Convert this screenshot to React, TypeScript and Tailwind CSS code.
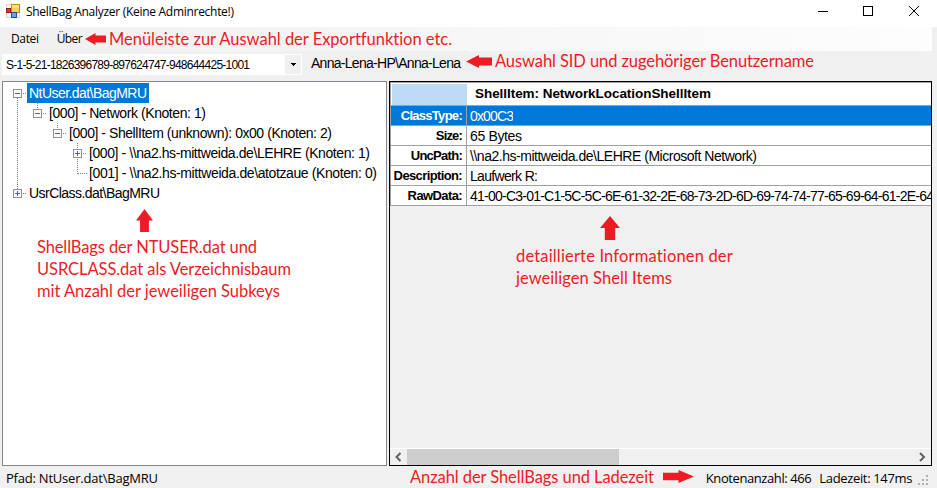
import { useLayoutEffect, useRef } from "react";
import type { ReactNode } from "react";
import clsx from "clsx";

// A line of text whose tracking is computed so that its glyphs span `w` pixels.
function Line({ w, className, children }: { w: number; className?: string; children: string }) {
  const ref = useRef<HTMLSpanElement>(null);
  useLayoutEffect(() => {
    const el = ref.current;
    if (!el) return;
    el.style.letterSpacing = "0px";
    const natural = el.getBoundingClientRect().width;
    el.style.letterSpacing = `${(w - natural) / (children.length - 1)}px`;
  }, [w, children]);
  return (
    <span ref={ref} className={clsx("inline-block whitespace-pre", className)}>
      {children}
    </span>
  );
}

const UI = "font-['Open_Sans','Noto_Sans',sans-serif] leading-4";
const ARIAL = "font-['Liberation_Sans',Arial,sans-serif] leading-4";
const NOTE = "font-[Lato,sans-serif] text-[16.5px] leading-[22px] text-[#ed1c24]";

type Dir = "left" | "right" | "up";
function Arrow({ dir, className }: { dir: Dir; className: string }) {
  const points = {
    left: "0,50 50,0 50,20 100,20 100,80 50,80 50,100",
    right: "100,50 50,0 50,22 0,22 0,78 50,78 50,100",
    up: "50,0 100,50 76,50 76,100 24,100 24,50 0,50",
  }[dir];
  return (
    <svg viewBox="0 0 100 100" preserveAspectRatio="none" className={clsx("absolute", className)}>
      <polygon points={points} fill="#ed1c24" />
    </svg>
  );
}

function Note({ className, children }: { className: string; children: ReactNode }) {
  return <div className={clsx("absolute flex flex-col items-start", NOTE, className)}>{children}</div>;
}

function AppIcon() {
  return (
    <svg width="14" height="14" viewBox="0 0 14 14" shapeRendering="crispEdges">
      <rect x="0" y="0" width="14" height="14" fill="#d9d9d9" />
      <rect x="1" y="1" width="12" height="12" fill="#f4f4f4" />
      <rect x="5" y="0" width="9" height="9" fill="#c08a10" />
      <rect x="6" y="1" width="7" height="7" fill="#ffcf4a" />
      <rect x="6" y="1" width="7" height="3" fill="#ffe08a" />
      <rect x="0" y="4" width="5" height="5" fill="#a01818" />
      <rect x="1" y="5" width="3" height="3" fill="#d8402f" />
      <rect x="5" y="8" width="6" height="6" fill="#1f4fae" />
      <rect x="6" y="9" width="4" height="4" fill="#6f9eee" />
    </svg>
  );
}

function Expander({ x, y, open }: { x: number; y: number; open: boolean }) {
  return (
    <g>
      <rect x={x - 3.5} y={y - 3.5} width="8" height="8" fill="#fafafa" stroke="#919191" />
      <path d={`M${x - 2} ${y + 0.5}h5`} stroke="#4b63a7" />
      {!open && <path d={`M${x + 0.5} ${y - 2}v5`} stroke="#4b63a7" />}
    </g>
  );
}

function TreeLines() {
  return (
    <svg width="100" height="130" className="absolute left-0 top-0" shapeRendering="crispEdges">
      <g stroke="#808080" strokeDasharray="1 1">
        <path d="M14.5 16V112 M34.5 21V32 M54.5 41V52 M74.5 61V92" />
        <path d="M20 11.5H24 M40 31.5H44 M60 51.5H64 M80 71.5H84 M75 91.5H84 M20 111.5H24" />
      </g>
      <Expander x={14} y={11} open />
      <Expander x={34} y={31} open />
      <Expander x={54} y={51} open />
      <Expander x={74} y={71} open={false} />
      <Expander x={14} y={111} open={false} />
    </svg>
  );
}

const nodes = [
  { pad: "pl-6", text: "NtUser.dat\\BagMRU", w: 118, selected: true },
  { pad: "pl-11", text: "[000] - Network (Knoten: 1)", w: 157 },
  { pad: "pl-16", text: "[000] - ShellItem (unknown): 0x00 (Knoten: 2)", w: 263 },
  { pad: "pl-21", text: "[000] - \\\\na2.hs-mittweida.de\\LEHRE (Knoten: 1)", w: 281 },
  { pad: "pl-21", text: "[001] - \\\\na2.hs-mittweida.de\\atotzaue (Knoten: 0)", w: 288 },
  { pad: "pl-6", text: "UsrClass.dat\\BagMRU", w: 131 },
];

const rows = [
  { name: "ClassType:", nw: 62, value: "0x00C3", w: 44, selected: true },
  { name: "Size:", nw: 27, value: "65 Bytes", w: 52 },
  { name: "UncPath:", nw: 52, value: "\\\\na2.hs-mittweida.de\\LEHRE (Microsoft Network)", w: 287 },
  { name: "Description:", nw: 69, value: "Laufwerk R:", w: 68 },
  {
    name: "RawData:",
    nw: 55,
    value: "41-00-C3-01-C1-5C-5C-6E-61-32-2E-68-73-2D-6D-69-74-74-77-65-69-64-61-2E-64",
    w: 464,
  },
];

export default function App() {
  return (
    <div className="relative flex h-[488px] w-[937px] flex-col overflow-hidden bg-[#f0f0f0] text-black">
      <header className="flex h-[27px] shrink-0 items-start bg-white pl-1.5">
        <div className="pt-1">
          <AppIcon />
        </div>
        <Line w={208} className={clsx(UI, "ml-1.5 mt-1 text-[12px]")}>ShellBag Analyzer (Keine Adminrechte!)</Line>
        <svg width="119" height="27" className="ml-auto" shapeRendering="crispEdges" fill="none" stroke="black">
          <path d="M0 11.5h10" />
          <rect x="45.5" y="6.5" width="9" height="9" />
          <path d="M91 6l10 10M101 6l-10 10" shapeRendering="geometricPrecision" />
        </svg>
      </header>

      <nav className={clsx("mr-[5px] flex h-6 shrink-0 bg-linear-to-r from-[#f0f0f0] to-[#fdfdfd] pl-[11px] pt-1 text-[12px]", UI)}>
        <Line w={28} className="mr-[18px]">Datei</Line>
        <Line w={26}>Über</Line>
      </nav>

      <div className="flex h-[30px] shrink-0 pl-0.5 pt-[3px]">
        <div className="flex h-[21px] w-[300px] justify-between bg-white p-px pl-1">
          <Line w={244} className={clsx(ARIAL, "mt-[2px] text-[12px]")}>
            S-1-5-21-1826396789-897624747-948644425-1001
          </Line>
          <div className="flex w-4 items-center justify-center bg-[#f0f0f0]">
            <svg width="5" height="3" viewBox="0 0 5 3" shapeRendering="crispEdges">
              <path d="M0 0h5v1H4v1H3v1H2V2H1V1H0z" />
            </svg>
          </div>
        </div>
        <Line w={150} className={clsx(ARIAL, "ml-[9px] mt-px text-[14px]")}>Anna-Lena-HP\Anna-Lena</Line>
      </div>

      <main className="flex h-[385px] shrink-0 gap-0.5 pl-0.5">
        <section className="relative w-[385px] border border-[#828790] bg-white pt-px">
          <TreeLines />
          {nodes.map((n) => (
            <div key={n.text} className={clsx("flex h-5", n.pad)}>
              <div className={clsx("flex h-5 items-center pl-0.5 text-[14px]", ARIAL, n.selected && "w-[122px] bg-[#0078d7] text-white")}>
                <Line w={n.w}>{n.text}</Line>
              </div>
            </div>
          ))}
        </section>

        <section className="flex w-[543px] flex-col overflow-hidden border border-black">
          <div className="border-l border-t border-[#a0a0a0]">
            <div className="flex h-[23px] border-b border-[#a0a0a0] bg-white">
              <div className="w-[76px] border-l border-t border-white bg-[#bcdcf4]" />
              <div className={clsx("flex items-center pl-2 text-[13.5px] font-bold", ARIAL)}>
                <Line w={236}>ShellItem: NetworkLocationShellItem</Line>
              </div>
            </div>
            {rows.map((r) => (
              <div
                key={r.name}
                className={clsx("flex h-5 border-b border-[#a0a0a0]", ARIAL, r.selected ? "bg-[#0078d7] text-white" : "bg-white")}
              >
                <div className="flex w-[76px] shrink-0 justify-end border-r border-[#a0a0a0] pr-1 pt-[2px] text-[13px] font-bold">
                  <Line w={r.nw}>{r.name}</Line>
                </div>
                <div className="overflow-hidden pl-[3px] pt-[2px] text-[14px]">
                  <Line w={r.w}>{r.value}</Line>
                </div>
              </div>
            ))}
          </div>
          <div className="mt-auto flex h-[17px] items-stretch border-t border-white">
            <svg width="17" height="16" fill="none" stroke="#606060" strokeWidth="2">
              <path d="M10.5 4L6.5 8l4 4" />
            </svg>
            <div className="w-[212px] bg-[#cdcdcd]" />
            <svg width="17" height="16" className="ml-auto" fill="none" stroke="#606060" strokeWidth="2">
              <path d="M6 4l4 4-4 4" />
            </svg>
          </div>
        </section>
      </main>

      <footer className={clsx("flex h-[22px] items-start pl-1.5 pr-[7px] pt-1 text-[13px]", UI)}>
        <Line w={152}>Pfad: NtUser.dat\BagMRU</Line>
        <div className="ml-auto flex gap-2">
          <Line w={106}>Knotenanzahl: 466</Line>
          <Line w={93}>Ladezeit: 147ms</Line>
        </div>
        <svg width="12" height="12" className="ml-1.5 mt-[5px]" fill="#b0b0b0" shapeRendering="crispEdges">
          <path d="M8 0h2v2H8zM4 4h2v2H4zM8 4h2v2H8zM0 8h2v2H0zM4 8h2v2H4zM8 8h2v2H8z" />
        </svg>
      </footer>

      <Arrow dir="left" className="left-[85px] top-[33px] h-3 w-[21px]" />
      <Note className="left-[109px] top-[28px]">
        <Line w={343}>Menüleiste zur Auswahl der Exportfunktion etc.</Line>
      </Note>
      <Arrow dir="left" className="left-[466px] top-[55px] h-[13px] w-[26px]" />
      <Note className="left-[495px] top-[50px]">
        <Line w={319}>Auswahl SID und zugehöriger Benutzername</Line>
      </Note>
      <Arrow dir="up" className="left-[136px] top-[209px] h-[23px] w-[17px]" />
      <Note className="left-[37px] top-[236px]">
        <Line w={220}>ShellBags der NTUSER.dat und</Line>
        <Line w={254}>USRCLASS.dat als Verzeichnisbaum</Line>
        <Line w={243}>mit Anzahl der jeweiligen Subkeys</Line>
      </Note>
      <Arrow dir="up" className="left-[600px] top-[216px] h-6 w-5" />
      <Note className="left-[516px] top-[245px]">
        <Line w={217}>detaillierte Informationen der</Line>
        <Line w={156}>jeweiligen Shell Items</Line>
      </Note>
      <Note className="left-[410px] top-[466px]">
        <Line w={244}>Anzahl der ShellBags und Ladezeit</Line>
      </Note>
      <Arrow dir="right" className="left-[663px] top-[470px] h-[13px] w-[31px]" />
    </div>
  );
}
